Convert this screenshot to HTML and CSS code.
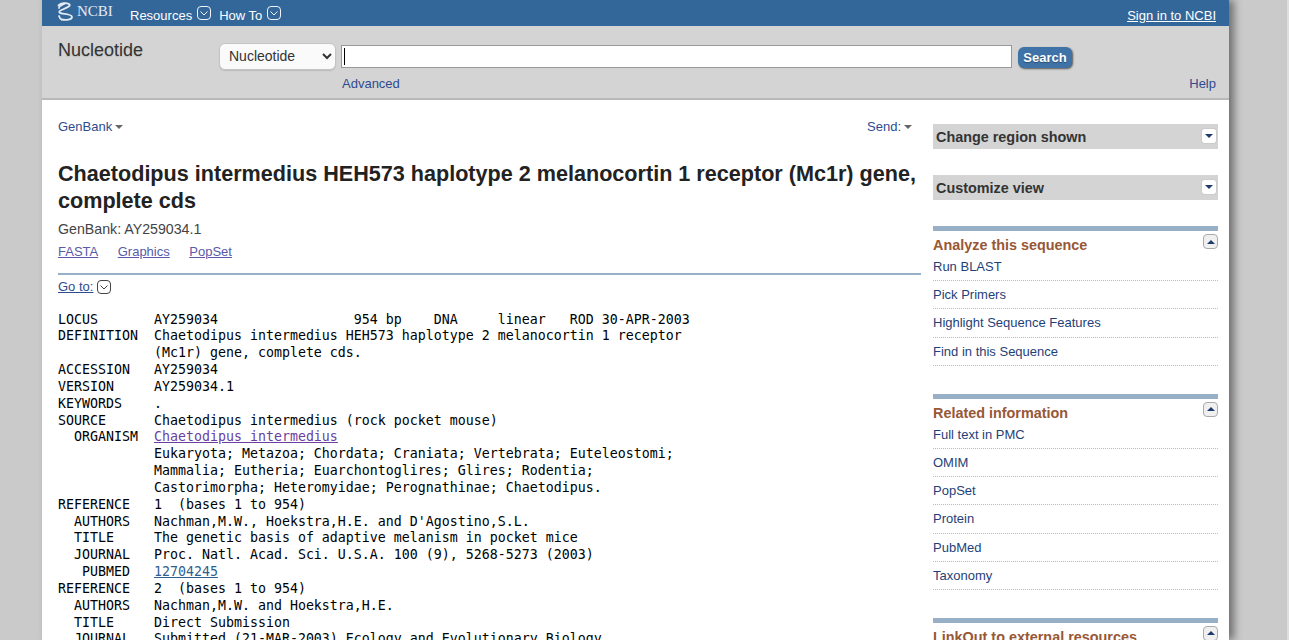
FILE: index.html
```html
<!DOCTYPE html>
<html lang="en">
<head>
    <meta charset="UTF-8">
    <title>Chaetodipus intermedius HEH573 haplotype 2 melanocortin 1 receptor (Mc1r) gene, complete cds - Nucleotide - NCBI</title>
    <link rel="stylesheet" href="styles.css">
</head>
<body>
    <div class="page">
        <div class="topbar">
            <a class="logo" href="#">
                <svg class="helix" width="17" height="19" viewBox="0 0 17 19" fill="none" stroke="#e4ebf2" stroke-width="1.8" stroke-linecap="round">
                    <path d="M1.5 3.5C4 1 9 0.5 12 2C15 4 8 6.5 4.5 8C1 9.5 2 11 5 11.5C9 12 15 12.500 15 15C15 17.500 9 18.500 4.500 17.500"/>
                    <path d="M8 1.500C5 3 1.500 4.500 2 6"/>
                    <path d="M2 14C2.500 15.500 3 17 4.500 17.500"/>
                </svg>
                <span class="logo-text">NCBI</span>
            </a>
            <a class="nav-link" href="#">Resources</a>
            <svg class="chev chev-white" width="14" height="14" viewBox="0 0 14 14"><rect x="0.5" y="0.5" width="13" height="13" rx="3.5"/><path d="M3.5 5.5L7 9L10.5 5.5"/></svg>
            <a class="nav-link nav-second" href="#">How To</a>
            <svg class="chev chev-white" width="14" height="14" viewBox="0 0 14 14"><rect x="0.5" y="0.5" width="13" height="13" rx="3.5"/><path d="M3.5 5.5L7 9L10.5 5.5"/></svg>
            <a class="signin" href="#">Sign in to NCBI</a>
        </div>

        <div class="searchbar">
            <div class="db-name">Nucleotide</div>
            <div class="search-main">
                <div class="search-row">
                    <select class="db-select">
                        <option>Nucleotide</option>
                    </select>
                    <div class="term-wrap">
                        <input class="term" type="text">
                        <span class="caret"></span>
                    </div>
                    <button class="search-btn">Search</button>
                </div>
                <div class="search-links">
                    <a href="#">Advanced</a>
                    <a href="#">Help</a>
                </div>
            </div>
        </div>

        <div class="content">
            <div class="record">
                <div class="format-row">
                    <a href="#">GenBank<span class="tri"></span></a>
                    <a href="#">Send:<span class="tri"></span></a>
                </div>
                <h1>Chaetodipus intermedius HEH573 haplotype 2 melanocortin 1 receptor (Mc1r) gene, complete cds</h1>
                <p class="accession">GenBank: AY259034.1</p>
                <div class="format-links">
                    <a href="#">FASTA</a>
                    <a href="#">Graphics</a>
                    <a href="#">PopSet</a>
                </div>
                <div class="goto">
                    <a href="#">Go to:</a>
                    <svg class="chev chev-dark" width="14" height="14" viewBox="0 0 14 14"><rect x="0.5" y="0.5" width="13" height="13" rx="3.5"/><path d="M3.5 5.5L7 9L10.5 5.5"/></svg>
                </div>
<pre class="genbank">LOCUS       AY259034                 954 bp    DNA     linear   ROD 30-APR-2003
DEFINITION  Chaetodipus intermedius HEH573 haplotype 2 melanocortin 1 receptor
            (Mc1r) gene, complete cds.
ACCESSION   AY259034
VERSION     AY259034.1
KEYWORDS    .
SOURCE      Chaetodipus intermedius (rock pocket mouse)
  ORGANISM  <a class="visited" href="#">Chaetodipus intermedius</a>
            Eukaryota; Metazoa; Chordata; Craniata; Vertebrata; Euteleostomi;
            Mammalia; Eutheria; Euarchontoglires; Glires; Rodentia;
            Castorimorpha; Heteromyidae; Perognathinae; Chaetodipus.
REFERENCE   1  (bases 1 to 954)
  AUTHORS   Nachman,M.W., Hoekstra,H.E. and D'Agostino,S.L.
  TITLE     The genetic basis of adaptive melanism in pocket mice
  JOURNAL   Proc. Natl. Acad. Sci. U.S.A. 100 (9), 5268-5273 (2003)
   PUBMED   <a href="#">12704245</a>
REFERENCE   2  (bases 1 to 954)
  AUTHORS   Nachman,M.W. and Hoekstra,H.E.
  TITLE     Direct Submission
  JOURNAL   Submitted (21-MAR-2003) Ecology and Evolutionary Biology</pre>
            </div>

            <div class="side">
                <div class="side-bar">
                    <span>Change region shown</span>
                    <span class="toggle"><i class="arrow-down"></i></span>
                </div>
                <div class="side-bar">
                    <span>Customize view</span>
                    <span class="toggle"><i class="arrow-down"></i></span>
                </div>

                <div class="portlet">
                    <div class="portlet-head">
                        <h3>Analyze this sequence</h3>
                        <span class="toggle toggle-open"><i class="arrow-up"></i></span>
                    </div>
                    <ul>
                        <li><a href="#">Run BLAST</a></li>
                        <li><a href="#">Pick Primers</a></li>
                        <li><a href="#">Highlight Sequence Features</a></li>
                        <li><a href="#">Find in this Sequence</a></li>
                    </ul>
                </div>

                <div class="portlet">
                    <div class="portlet-head">
                        <h3>Related information</h3>
                        <span class="toggle toggle-open"><i class="arrow-up"></i></span>
                    </div>
                    <ul>
                        <li><a href="#">Full text in PMC</a></li>
                        <li><a href="#">OMIM</a></li>
                        <li><a href="#">PopSet</a></li>
                        <li><a href="#">Protein</a></li>
                        <li><a href="#">PubMed</a></li>
                        <li><a href="#">Taxonomy</a></li>
                    </ul>
                </div>

                <div class="portlet">
                    <div class="portlet-head">
                        <h3>LinkOut to external resources</h3>
                        <span class="toggle toggle-open"><i class="arrow-up"></i></span>
                    </div>
                </div>
            </div>
        </div>
    </div>
</body>
</html>
```

FILE: styles.css
```css
html, body {
    height: 100%;
    overflow: hidden;
}

body {
    box-sizing: border-box;
    margin: 0;
    border-right: 2px solid #dedede;
    background-color: #cacaca;
    font-family: "Liberation Sans", Arial, sans-serif;
    font-size: 13px;
    color: #333;
}

a {
    color: #2f4b8f;
    text-decoration: none;
}

.page {
    width: 1187px;
    height: 640px;
    margin-left: 42px;
    background-color: #fff;
    box-shadow: 5px 0 8px rgba(0, 0, 0, 0.45);
    overflow: hidden;
}

/* top blue bar */
.topbar {
    display: flex;
    align-items: center;
    height: 26px;
    padding: 0 13px 0 15px;
    background-color: #336699;
}

.logo {
    display: flex;
    align-items: center;
    width: 73px;
    margin-top: -4px;
}

.logo-text {
    margin-left: 3px;
    font-family: "Liberation Serif", serif;
    font-size: 15px;
    color: #e4ebf2;
}

.nav-link {
    color: #fff;
    font-size: 13px;
    margin-top: 5px;
}

.nav-second {
    margin-left: 8px;
}

.chev {
    margin-left: 5px;
    fill: none;
}

.chev-white {
    margin-top: -1px;
    stroke: #f0f4f8;
}

.chev-dark {
    stroke: #444;
}

.signin {
    margin-left: auto;
    margin-top: 5px;
    color: #fff;
    text-decoration: underline;
}

/* search area */
.searchbar {
    display: flex;
    height: 74px;
    box-sizing: border-box;
    padding: 0 13px 0 16px;
    background-color: #d4d4d4;
    border-bottom: 2px solid #b8b8b8;
}

.db-name {
    width: 161px;
    padding-top: 14px;
    font-size: 18px;
    color: #333;
    text-shadow: 0 1px 1px #bbb;
}

.search-main {
    flex: 1;
    padding-top: 17px;
}

.search-row {
    display: flex;
    align-items: center;
}

.db-select {
    width: 117px;
    height: 27px;
    padding: 0 0 2px 5px;
    border: 1px solid #c4c4c4;
    border-radius: 6px;
    background-color: #fafafa;
    box-shadow: 0 1px 1px #bbb;
    font-family: "Liberation Sans", Arial, sans-serif;
    font-size: 14px;
    color: #333;
}

.term-wrap {
    position: relative;
    margin-left: 5px;
}

.term {
    display: block;
    width: 671px;
    height: 23px;
    box-sizing: border-box;
    border: 1px solid #999;
    background-color: #fff;
    padding: 0 3px;
}

.caret {
    position: absolute;
    left: 3px;
    top: 3px;
    width: 1px;
    height: 17px;
    background-color: #000;
}

.search-btn {
    width: 54px;
    height: 21px;
    margin: 1px 0 0 6px;
    padding: 0;
    border: 0;
    border-radius: 6px;
    background-color: #3f73a8;
    box-shadow: 1px 1px 2px #555;
    color: #fff;
    font-family: "Liberation Sans", Arial, sans-serif;
    font-size: 13px;
    font-weight: bold;
    text-shadow: 0 1px 1px #2a4d70;
}

.search-links {
    display: flex;
    justify-content: space-between;
    padding: 6px 0 0 123px;
}

/* main columns */
.content {
    display: flex;
    padding-left: 16px;
}

.record {
    width: 863px;
    flex: none;
}

.format-row {
    display: flex;
    justify-content: space-between;
    padding: 19px 9px 0 0;
    height: 15px;
}

.tri {
    display: inline-block;
    margin-left: 3px;
    vertical-align: 2px;
    border-left: 4px solid transparent;
    border-right: 4px solid transparent;
    border-top: 4px solid #666;
}

h1 {
    margin: 26px 0 0;
    font-size: 21.6px;
    line-height: 27px;
    font-weight: bold;
    color: #222;
}

.accession {
    margin: 7px 0 0;
    font-size: 14.2px;
    line-height: 16px;
    color: #444;
}

.format-links {
    display: flex;
    gap: 19.5px;
    height: 29px;
    margin-top: 7px;
    border-bottom: 2px solid #97b0c8;
}

.format-links a {
    color: #5a5aa8;
    text-decoration: underline;
    line-height: 16px;
}

.goto {
    display: flex;
    align-items: center;
    margin-top: 4px;
}

.goto a {
    text-decoration: underline;
}

.goto .chev {
    margin-left: 4px;
}

.genbank {
    margin: 17.6px 0 0;
    font-family: "DejaVu Sans Mono", monospace;
    font-size: 13.29px;
    line-height: 16.83px;
    color: #000;
}

.genbank a {
    text-decoration: underline;
    color: #2f5f8f;
}

.genbank .visited {
    color: #6b3fa0;
}

/* right column */
.side {
    width: 285px;
    margin-left: 12px;
    padding-top: 24px;
}

.side-bar {
    display: flex;
    justify-content: space-between;
    height: 25px;
    margin-bottom: 26px;
    padding-left: 3px;
    background-color: #d4d4d4;
    font-size: 14.4px;
    font-weight: bold;
    line-height: 27px;
    color: #333;
}

.toggle {
    display: flex;
    align-items: center;
    justify-content: center;
    width: 14px;
    height: 14px;
    margin: 5px 2px 0 0;
    background-color: #fff;
    border-radius: 2px;
    box-shadow: 0 0 1px #888;
}

.toggle-open {
    box-sizing: border-box;
    width: 15px;
    height: 15px;
    margin: 3px 0 0;
    border: 1px solid #aaa;
    border-radius: 4px;
    background-color: #f0f0f0;
    box-shadow: none;
}

.arrow-down {
    border-left: 4px solid transparent;
    border-right: 4px solid transparent;
    border-top: 4px solid #1e3a6e;
}

.arrow-up {
    border-left: 4px solid transparent;
    border-right: 4px solid transparent;
    border-bottom: 4px solid #1e3a6e;
}

.portlet {
    border-top: 5px solid #97b0c8;
    margin-bottom: 28px;
}

.portlet-head {
    display: flex;
    justify-content: space-between;
    align-items: flex-start;
}

.portlet h3 {
    margin: 6px 0 0;
    font-size: 14.4px;
    line-height: 16px;
    color: #985735;
}

.portlet ul {
    margin: 0;
    padding: 0;
    list-style: none;
}

.portlet li {
    box-sizing: border-box;
    height: 28.2px;
    padding-top: 4px;
    border-bottom: 1px dotted #bbb;
    line-height: 19px;
}

.portlet li a {
    color: #1f3f78;
}
```
